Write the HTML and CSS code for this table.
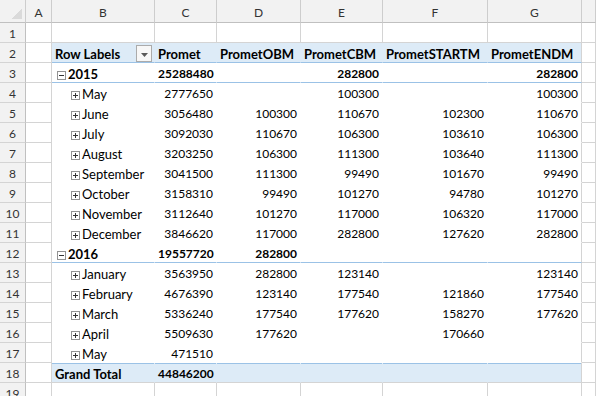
FILE: index.html
```html
<!DOCTYPE html>
<html lang="en">
<head>
    <meta charset="UTF-8">
    <title>Pivot - Promet</title>
    <link rel="stylesheet" href="styles.css">
</head>
<body>
    <div class="sheet">
        <div class="row col-heads">
            <div class="corner"></div>
            <div>A</div><div>B</div><div>C</div><div>D</div><div>E</div><div>F</div><div>G</div><div></div>
        </div>

        <div class="row">
            <div class="row-head">1</div>
            <div></div><div></div><div></div><div></div><div></div><div></div><div></div><div></div>
        </div>

        <div class="row">
            <div class="row-head">2</div>
            <div></div>
            <div class="pv pv-head label-head">
                <span>Row Labels</span>
                <span class="filter-btn"><svg width="7" height="4" viewBox="0 0 7 4"><path d="M0 0h7L3.5 4z" fill="#595959"/></svg></span>
            </div>
            <div class="pv pv-head">Promet</div>
            <div class="pv pv-head">PrometOBM</div>
            <div class="pv pv-head">PrometCBM</div>
            <div class="pv pv-head">PrometSTARTM</div>
            <div class="pv pv-head pv-end">PrometENDM</div>
            <div></div>
        </div>

        <!-- 2015 -->
        <div class="row">
            <div class="row-head">3</div>
            <div></div>
            <div class="pv year label"><span class="tg"></span>2015</div>
            <div class="pv year num">25288480</div>
            <div class="pv year num"></div>
            <div class="pv year num">282800</div>
            <div class="pv year num"></div>
            <div class="pv year num pv-end">282800</div>
            <div></div>
        </div>
        <div class="row">
            <div class="row-head">4</div>
            <div></div>
            <div class="pv label month"><span class="tg plus"></span>May</div>
            <div class="pv num">2777650</div>
            <div class="pv num"></div>
            <div class="pv num">100300</div>
            <div class="pv num"></div>
            <div class="pv num pv-end">100300</div>
            <div></div>
        </div>
        <div class="row">
            <div class="row-head">5</div>
            <div></div>
            <div class="pv label month"><span class="tg plus"></span>June</div>
            <div class="pv num">3056480</div>
            <div class="pv num">100300</div>
            <div class="pv num">110670</div>
            <div class="pv num">102300</div>
            <div class="pv num pv-end">110670</div>
            <div></div>
        </div>
        <div class="row">
            <div class="row-head">6</div>
            <div></div>
            <div class="pv label month"><span class="tg plus"></span>July</div>
            <div class="pv num">3092030</div>
            <div class="pv num">110670</div>
            <div class="pv num">106300</div>
            <div class="pv num">103610</div>
            <div class="pv num pv-end">106300</div>
            <div></div>
        </div>
        <div class="row">
            <div class="row-head">7</div>
            <div></div>
            <div class="pv label month"><span class="tg plus"></span>August</div>
            <div class="pv num">3203250</div>
            <div class="pv num">106300</div>
            <div class="pv num">111300</div>
            <div class="pv num">103640</div>
            <div class="pv num pv-end">111300</div>
            <div></div>
        </div>
        <div class="row">
            <div class="row-head">8</div>
            <div></div>
            <div class="pv label month"><span class="tg plus"></span>September</div>
            <div class="pv num">3041500</div>
            <div class="pv num">111300</div>
            <div class="pv num">99490</div>
            <div class="pv num">101670</div>
            <div class="pv num pv-end">99490</div>
            <div></div>
        </div>
        <div class="row">
            <div class="row-head">9</div>
            <div></div>
            <div class="pv label month"><span class="tg plus"></span>October</div>
            <div class="pv num">3158310</div>
            <div class="pv num">99490</div>
            <div class="pv num">101270</div>
            <div class="pv num">94780</div>
            <div class="pv num pv-end">101270</div>
            <div></div>
        </div>
        <div class="row">
            <div class="row-head">10</div>
            <div></div>
            <div class="pv label month"><span class="tg plus"></span>November</div>
            <div class="pv num">3112640</div>
            <div class="pv num">101270</div>
            <div class="pv num">117000</div>
            <div class="pv num">106320</div>
            <div class="pv num pv-end">117000</div>
            <div></div>
        </div>
        <div class="row">
            <div class="row-head">11</div>
            <div></div>
            <div class="pv label month"><span class="tg plus"></span>December</div>
            <div class="pv num">3846620</div>
            <div class="pv num">117000</div>
            <div class="pv num">282800</div>
            <div class="pv num">127620</div>
            <div class="pv num pv-end">282800</div>
            <div></div>
        </div>

        <!-- 2016 -->
        <div class="row">
            <div class="row-head">12</div>
            <div></div>
            <div class="pv year label"><span class="tg"></span>2016</div>
            <div class="pv year num">19557720</div>
            <div class="pv year num">282800</div>
            <div class="pv year num"></div>
            <div class="pv year num"></div>
            <div class="pv year num pv-end"></div>
            <div></div>
        </div>
        <div class="row">
            <div class="row-head">13</div>
            <div></div>
            <div class="pv label month"><span class="tg plus"></span>January</div>
            <div class="pv num">3563950</div>
            <div class="pv num">282800</div>
            <div class="pv num">123140</div>
            <div class="pv num"></div>
            <div class="pv num pv-end">123140</div>
            <div></div>
        </div>
        <div class="row">
            <div class="row-head">14</div>
            <div></div>
            <div class="pv label month"><span class="tg plus"></span>February</div>
            <div class="pv num">4676390</div>
            <div class="pv num">123140</div>
            <div class="pv num">177540</div>
            <div class="pv num">121860</div>
            <div class="pv num pv-end">177540</div>
            <div></div>
        </div>
        <div class="row">
            <div class="row-head">15</div>
            <div></div>
            <div class="pv label month"><span class="tg plus"></span>March</div>
            <div class="pv num">5336240</div>
            <div class="pv num">177540</div>
            <div class="pv num">177620</div>
            <div class="pv num">158270</div>
            <div class="pv num pv-end">177620</div>
            <div></div>
        </div>
        <div class="row">
            <div class="row-head">16</div>
            <div></div>
            <div class="pv label month"><span class="tg plus"></span>April</div>
            <div class="pv num">5509630</div>
            <div class="pv num">177620</div>
            <div class="pv num"></div>
            <div class="pv num">170660</div>
            <div class="pv num pv-end"></div>
            <div></div>
        </div>
        <div class="row">
            <div class="row-head">17</div>
            <div></div>
            <div class="pv label month"><span class="tg plus"></span>May</div>
            <div class="pv num">471510</div>
            <div class="pv num"></div>
            <div class="pv num"></div>
            <div class="pv num"></div>
            <div class="pv num pv-end"></div>
            <div></div>
        </div>

        <div class="row">
            <div class="row-head">18</div>
            <div></div>
            <div class="pv total">Grand Total</div>
            <div class="pv total num">44846200</div>
            <div class="pv total num"></div>
            <div class="pv total num"></div>
            <div class="pv total num"></div>
            <div class="pv total num pv-end"></div>
            <div></div>
        </div>

        <div class="row">
            <div class="row-head">19</div>
            <div></div><div></div><div></div><div></div><div></div><div></div><div></div><div></div>
        </div>
    </div>
</body>
</html>
```

FILE: styles.css
```css
html, body {
    margin: 0;
    height: 396px;
    overflow: hidden;
}
body {
    font-family: Lato, "Open Sans", sans-serif;
    font-size: 12px;
    color: #000;
    background: #fff;
}

/* grid of the sheet */
.row {
    display: grid;
    grid-template-columns: 26px 26px 103px 62px 84px 82px 105px 94px 1fr;
    height: 20px;
}
.row > * {
    box-sizing: border-box;
    border-right: 1px solid #d4d4d4;
    border-bottom: 1px solid #d4d4d4;
    padding-top: 3px;
    line-height: 16px;
    white-space: nowrap;
    overflow: hidden;
}

/* column letters and row numbers */
.col-heads {
    height: 23px;
}
.col-heads > * {
    background: #f2f2f2;
    color: #333;
    text-align: center;
    padding-top: 5px;
    border-right-color: #cdcdcd;
    border-bottom-color: #c0c0c0;
}
.corner {
    background: #f2f2f2 linear-gradient(to bottom right, transparent 50%, #dadada 50%) no-repeat right 3px bottom 3px / 10px 11px;
}
.row-head {
    background: #f2f2f2;
    color: #333;
    text-align: center;
    border-right-color: #c0c0c0;
}

/* pivot table */
.pv {
    background: #fff;
    border-right-color: transparent;
    border-bottom-color: transparent;
    padding-left: 3px;
    font-size: 13px;
}
.pv-end {
    border-right-color: #d4d4d4;
}
.num {
    text-align: right;
    padding-right: 3px;
    font-size: 12px;
}
.pv-head {
    background: #ddebf7;
    font-weight: bold;
    border-bottom-color: #9bc2e6;
}
.label-head {
    display: flex;
    justify-content: space-between;
    padding-top: 0;
}
.label-head span:first-child {
    padding-top: 3px;
}
.filter-btn {
    box-sizing: border-box;
    width: 16px;
    height: 17px;
    margin: 2px 2px 0 0;
    border: 1px solid #ababab;
    background: #f7f7f7;
    display: flex;
    align-items: center;
    justify-content: center;
    padding-top: 2px;
}
.filter-btn svg {
    display: block;
}
.year {
    font-weight: bold;
    border-bottom-color: #9bc2e6;
}
.label {
    display: flex;
    padding-left: 5px;
}
.label.month {
    padding-left: 19px;
}
.tg {
    flex: none;
    box-sizing: border-box;
    width: 9px;
    height: 9px;
    margin: 5px 2px 0 0;
    border: 1px solid #939393;
    background: #fff linear-gradient(#333, #333) no-repeat center / 5px 1px;
}
.tg.plus {
    background:
        linear-gradient(#333, #333) no-repeat center / 5px 1px,
        linear-gradient(#333, #333) no-repeat center / 1px 5px,
        #fff;
}
.total {
    background: #ddebf7;
    font-weight: bold;
    border-bottom-color: #d4d4d4;
    box-shadow: inset 0 1px #9bc2e6;
}
```
